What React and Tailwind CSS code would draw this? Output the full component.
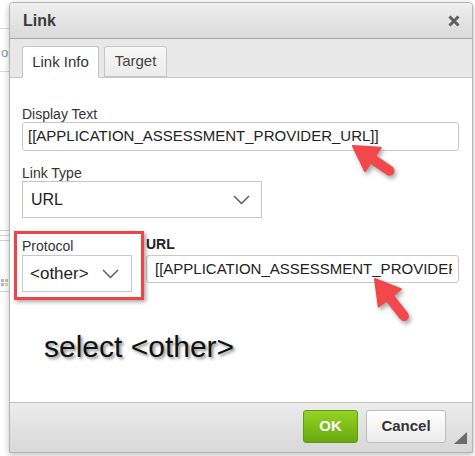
import React from 'react'

const font = { fontFamily: '"Liberation Sans", Arial, sans-serif' }

function Chevron() {
  return (
    <svg width="17" height="10" viewBox="0 0 17 10" className="shrink-0">
      <path d="M1 1 L8.5 8.5 L16 1" fill="none" stroke="#555" strokeWidth="1.4" />
    </svg>
  )
}

function Arrow({ x, y, angle, len }) {
  return (
    <g transform={`translate(${x},${y}) rotate(${angle})`}>
      <line x1="16" y1="0" x2={len} y2="0" stroke="#f2474b" strokeWidth="10" strokeLinecap="round" />
      <polygon points="0,0 24,-14 24,14" fill="#f2474b" strokeLinejoin="round" stroke="#f2474b" strokeWidth="2" />
    </g>
  )
}

export default function App() {
  return (
    <div className="relative w-[475px] h-[456px] bg-white overflow-hidden flex" style={font}>
      {/* page behind the dialog */}
      <div className="w-[9px] shrink-0 flex flex-col">
        <div className="h-[29px] border-b border-[#d8d8d8]"></div>
        <div className="h-[16px]"></div>
        <div className="text-[13px] leading-[16px] text-[#7a93b0] pl-[1px]">or</div>
        <div className="h-[11px] border-b border-[#d8d8d8]"></div>
        <div className="h-[155px]"></div>
        <div className="h-[4px] border-b border-[#cfcfcf]"></div>
        <div className="h-[5px] border-b border-[#cfcfcf]"></div>
        <div className="h-[5px] border-b border-[#cfcfcf]"></div>
        <div className="h-[38px]"></div>
        <div className="flex gap-[1px] pl-[1px]">
          <div className="w-[3px] h-[3px] bg-[#f1a0a0]"></div>
          <div className="w-[3px] h-[3px] bg-[#a8d8a0]"></div>
        </div>
        <div className="flex gap-[1px] pl-[1px] mt-[1px]">
          <div className="w-[3px] h-[3px] bg-[#a0b8f0]"></div>
          <div className="w-[3px] h-[3px] bg-[#f0d890]"></div>
        </div>
        <div className="h-[6px] border-b border-[#cfcfcf]"></div>
      </div>

      {/* dialog */}
      <div className="mt-[2px] w-[464px] h-[451px] flex flex-col border border-[#b4b4b4] rounded-t-[4px] shadow-[0_2px_6px_rgba(0,0,0,0.25)] bg-white">
        {/* title bar */}
        <div className="h-[36px] shrink-0 flex items-center justify-between pl-[13px] pr-[12px] rounded-t-[4px] bg-gradient-to-b from-[#f0f0f0] to-[#d9d9d9] border-b border-[#a6a6a6]">
          <span className="text-[16px] font-bold text-[#3a3a3a]">Link</span>
          <svg width="12" height="12" viewBox="0 0 12 12">
            <path d="M1.5 1.5 L10.5 10.5 M10.5 1.5 L1.5 10.5" stroke="#5f5f5f" strokeWidth="3" />
          </svg>
        </div>

        {/* tabs */}
        <div className="h-[39px] shrink-0 bg-[#e8e8e8] border-b border-[#c6c6c6] flex items-end pl-[12px] gap-[5px]">
          <div className="h-[32px] w-[77px] -mb-[1px] bg-white border border-[#c6c6c6] border-b-white rounded-t-[3px] flex items-center justify-center text-[15px] text-[#333]">
            Link Info
          </div>
          <div className="h-[31px] w-[63px] bg-gradient-to-b from-[#f7f7f7] to-[#ececec] border border-[#c6c6c6] rounded-t-[3px] flex items-center justify-center text-[15px] text-[#444]">
            Target
          </div>
        </div>

        {/* body */}
        <div className="flex-1 pl-[12px] pr-[13px] pt-[28px] flex flex-col">
          <div className="text-[14px] leading-[16px] text-[#333]">Display Text</div>
          <div className="h-[29px] border border-[#c8c8c8] rounded-[3px] flex items-center pl-[5px] text-[15px] text-[#222] whitespace-nowrap overflow-hidden">
            [[APPLICATION_ASSESSMENT_PROVIDER_URL]]
          </div>

          <div className="mt-[14px] text-[14px] leading-[16px] text-[#333]">Link Type</div>
          <div className="h-[37px] w-[240px] border border-[#c8c8c8] flex items-center justify-between pl-[8px] pr-[11px] text-[16px] text-[#222]">
            <span>URL</span>
            <Chevron />
          </div>

          <div className="mt-[20px] flex gap-[14px]">
            <div className="relative w-[110px] shrink-0">
              <div className="absolute -left-[8px] -top-[7px] -right-[12px] -bottom-[8px] border-[3px] border-[#ef4447] shadow-[2px_2px_4px_rgba(0,0,0,0.35)]"></div>
              <div className="text-[14px] leading-[16px] text-[#333]">Protocol</div>
              <div className="mt-[1px] h-[37px] border border-[#c8c8c8] flex items-center justify-between pl-[7px] pr-[12px] text-[17px] text-[#222]">
                <span>&lt;other&gt;</span>
                <Chevron />
              </div>
            </div>
            <div className="flex-1 min-w-0">
              <div className="text-[14px] leading-[16px] font-bold text-[#222] -mt-[2px]">URL</div>
              <div className="mt-[3px] h-[28px] border border-[#c8c8c8] rounded-[3px] flex items-center pl-[8px] pr-[6px] text-[15px] text-[#222]">
                <div className="flex-1 min-w-0 whitespace-nowrap overflow-hidden">
                  [[APPLICATION_ASSESSMENT_PROVIDER_URL]]
                </div>
              </div>
            </div>
          </div>

          <div className="mt-[38px] pl-[22px] text-[30px] leading-[34px] text-[#111] [text-shadow:2px_2px_3px_rgba(0,0,0,0.45)]">
            select &lt;other&gt;
          </div>
        </div>

        {/* footer */}
        <div className="h-[50px] shrink-0 border-t border-[#c2c2c2] bg-gradient-to-b from-[#ececec] to-[#d8d8d8] flex items-center justify-end gap-[8px] pr-[26px] pb-[2px] relative">
          <button className="h-[33px] w-[55px] rounded-[3px] border border-[#5e9b10] bg-gradient-to-b from-[#95d324] to-[#69a80d] text-white text-[15px] font-bold">
            OK
          </button>
          <button className="h-[33px] w-[80px] rounded-[3px] border border-[#bdbdbd] bg-gradient-to-b from-white to-[#ebebeb] text-[#333] text-[15px] font-bold">
            Cancel
          </button>
          <svg width="13" height="12" viewBox="0 0 13 12" className="absolute right-[5px] bottom-[8px]">
            <polygon points="13,0 13,12 0,12" fill="#6b6b6b" />
          </svg>
        </div>
      </div>

      {/* annotation arrows */}
      <svg width="475" height="456" className="absolute left-0 top-0 pointer-events-none" style={{ filter: 'drop-shadow(2px 3px 2px rgba(0,0,0,0.35))' }}>
        <Arrow x={353} y={146} angle={34} len={44} />
        <Arrow x={375} y={279} angle={52} len={47} />
      </svg>
    </div>
  )
}
